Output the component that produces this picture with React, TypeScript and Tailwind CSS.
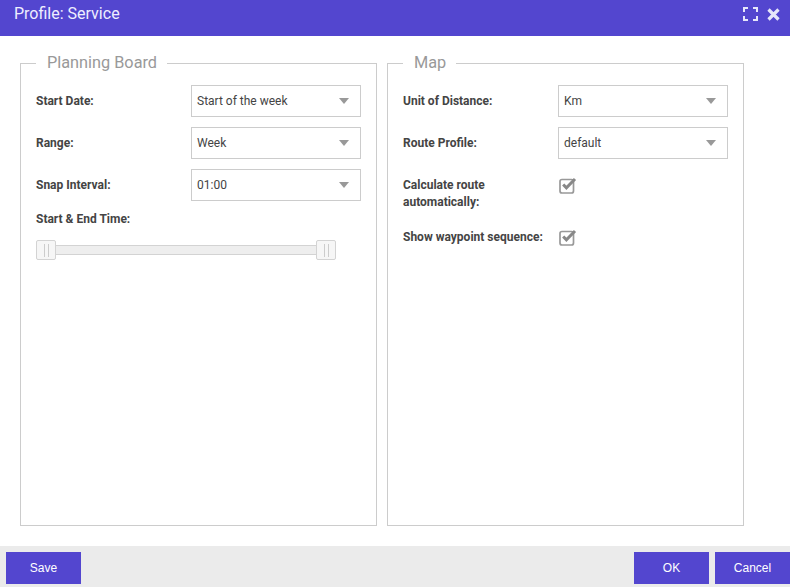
import { ReactNode } from "react";

function Select({ value }: { value: string }) {
  return (
    <div className="flex h-8 w-[170px] shrink-0 items-center justify-between border border-[#cccccc] bg-white pl-[5px] pr-[11px] text-xs text-[#444444]">
      <span>{value}</span>
      <span className="h-0 w-0 border-x-[5px] border-t-[6px] border-x-transparent border-t-[#999999]" />
    </div>
  );
}

function Row({ label, value }: { label: string; value: string }) {
  return (
    <div className="mb-[10px] flex items-center">
      <label className="w-[155px] shrink-0 text-xs font-bold text-[#444444]">{label}</label>
      <Select value={value} />
    </div>
  );
}

function Check() {
  return (
    <svg width="18" height="17" viewBox="0 0 18 17" className="ml-[1px] block">
      <rect x="1" y="2.5" width="13.5" height="13.5" rx="2" fill="#ffffff" stroke="#999999" strokeWidth="1.7" />
      <path d="M4.2 7.5l3.2 3.4L16 2" fill="none" stroke="#888888" strokeWidth="3" />
    </svg>
  );
}

function Handle() {
  return (
    <div className="z-10 flex h-5 w-5 shrink-0 items-center justify-center gap-[3px] rounded-[2px] border border-[#d3d3d3] bg-[#f6f6f6]">
      <span className="h-[13px] w-px bg-[#cccccc]" />
      <span className="h-[13px] w-px bg-[#cccccc]" />
    </div>
  );
}

function Panel({ title, children }: { title: string; children: ReactNode }) {
  return (
    <fieldset className="h-[473px] w-[357px] border border-[#cccccc] px-[15px]">
      <legend className="pb-[2px] pl-[11px] pr-[10px] font-['Roboto',sans-serif] text-[16.3px] leading-[19px] text-[#999999]">{title}</legend>
      <div className="pt-[11px]">{children}</div>
    </fieldset>
  );
}

export default function App() {
  return (
    <div className="flex h-[587px] w-[790px] flex-col overflow-hidden bg-white font-['Roboto',sans-serif]">
      {/* Header */}
      <div className="flex h-9 shrink-0 items-start justify-between bg-[#5346cf] pl-[14px] pr-[10px] pt-[4px]">
        <h1 className="text-base leading-[20px] text-[#eeeeff]">Profile: Service</h1>
        <div className="flex items-center gap-[9px] pt-[3px]">
          <svg width="15" height="14" viewBox="0 0 15 14" fill="none" stroke="#e6e6fa" strokeWidth="2">
            <path d="M1 5V1h4M10 1h4v4M14 9v4h-4M5 13H1V9" />
          </svg>
          <svg width="13" height="13" viewBox="0 0 13 13" fill="none" stroke="#e6e6fa" strokeWidth="3.2">
            <path d="M1.5 1.5l10 10M11.5 1.5l-10 10" />
          </svg>
        </div>
      </div>

      {/* Content */}
      <div className="flex flex-1 gap-[10px] pl-5 pt-[17px]">
        <Panel title="Planning Board">
          <Row label="Start Date:" value="Start of the week" />
          <Row label="Range:" value="Week" />
          <Row label="Snap Interval:" value="01:00" />
          <div className="pt-[1px] text-xs font-bold leading-[14px] text-[#444444]">Start &amp; End Time:</div>
          <div className="mt-[14px] flex w-[300px] items-center">
            <Handle />
            <div className="h-[10px] flex-1 border-y border-[#d3d3d3] bg-[#eeeeee]" />
            <Handle />
          </div>
        </Panel>
        <Panel title="Map">
          <Row label="Unit of Distance:" value="Km" />
          <Row label="Route Profile:" value="default" />
          <div className="flex items-start pt-[8px]">
            <label className="w-[155px] shrink-0 text-xs font-bold leading-[17px] text-[#444444]">
              Calculate route
              <br />
              automatically:
            </label>
            <Check />
          </div>
          <div className="flex items-start pt-[18px]">
            <label className="w-[155px] shrink-0 text-xs font-bold leading-[17px] text-[#444444]">Show waypoint sequence:</label>
            <Check />
          </div>
        </Panel>
      </div>

      {/* Footer */}
      <div className="flex h-[41px] shrink-0 items-start justify-between bg-[#ebebeb] pl-[6px] pt-[6px]">
        <button className="h-8 w-[75px] bg-[#5346cf] font-['Liberation_Sans',sans-serif] text-xs text-white">Save</button>
        <div className="flex gap-[6px]">
          <button className="h-8 w-[75px] bg-[#5346cf] font-['Liberation_Sans',sans-serif] text-xs text-white">OK</button>
          <button className="h-8 w-[75px] bg-[#5346cf] font-['Liberation_Sans',sans-serif] text-xs text-white">Cancel</button>
        </div>
      </div>
    </div>
  );
}
